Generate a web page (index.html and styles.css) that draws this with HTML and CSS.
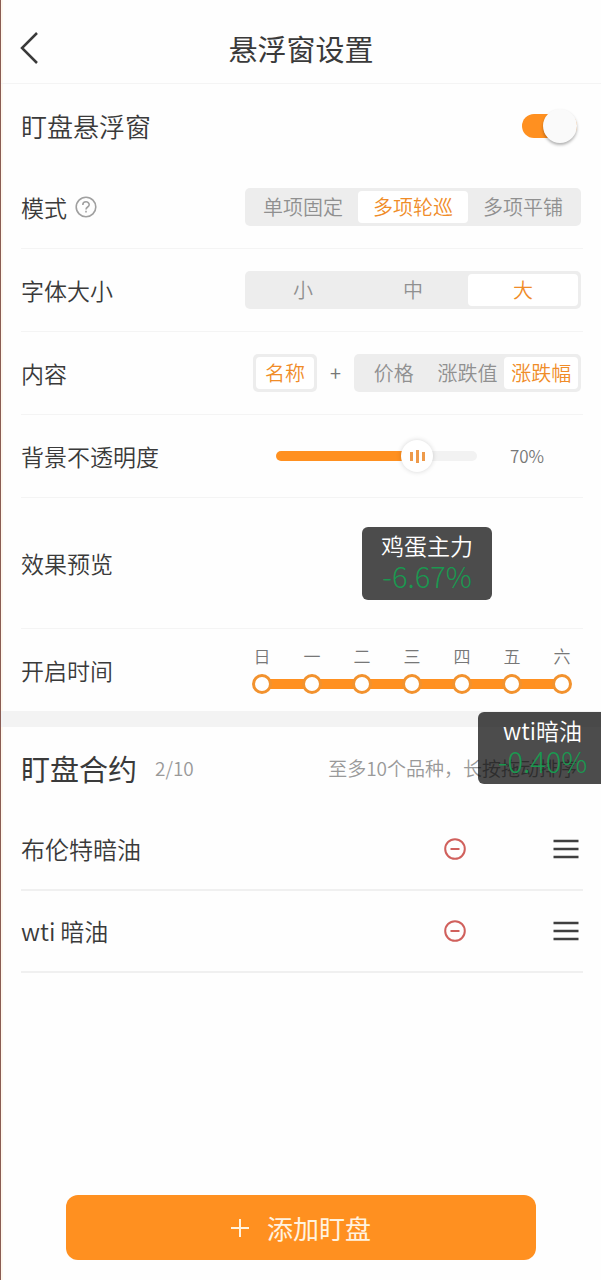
FILE: index.html
```html
<!DOCTYPE html>
<html lang="zh-CN">
<head>
    <meta charset="UTF-8">
    <meta name="viewport" content="width=device-width, initial-scale=1.0">
    <title>悬浮窗设置</title>
    <link rel="stylesheet" href="styles.css">
</head>
<body>
    <div class="page">
        <header>
            <button type="button" class="icon-btn" aria-label="返回">
                <svg width="20" height="34" viewBox="0 0 20 34" fill="none" stroke="#3a3a3a" stroke-width="2.5"><path d="M18 2 L3 17 L18 32"/></svg>
            </button>
            <h1>悬浮窗设置</h1>
        </header>

        <main>
            <section class="settings">
                <div class="row row-main">
                    <label for="float">盯盘悬浮窗</label>
                    <input type="checkbox" id="float" class="switch" checked>
                </div>

                <div class="row">
                    <span class="name">模式</span>
                    <button type="button" class="icon-btn help" aria-label="模式说明">
                        <svg width="22" height="22" viewBox="0 0 22 22" fill="none" stroke="#a0a0a0" stroke-width="1.6"><circle cx="11" cy="11" r="9.8"/><path d="M7.8 9 C7.8 4.8 14.2 4.8 14.2 8.8 C14.2 11 11 11 11 13.4"/><path d="M11 14.8 V16.6"/></svg>
                    </button>
                    <div class="segment" role="radiogroup" aria-label="模式">
                        <label><input type="radio" name="mode"><span>单项固定</span></label>
                        <label><input type="radio" name="mode" checked><span>多项轮巡</span></label>
                        <label><input type="radio" name="mode"><span>多项平铺</span></label>
                    </div>
                </div>

                <div class="row">
                    <span class="name">字体大小</span>
                    <div class="segment" role="radiogroup" aria-label="字体大小">
                        <label><input type="radio" name="size"><span>小</span></label>
                        <label><input type="radio" name="size"><span>中</span></label>
                        <label><input type="radio" name="size" checked><span>大</span></label>
                    </div>
                </div>

                <div class="row">
                    <span class="name">内容</span>
                    <div class="content-pick">
                        <div class="segment segment-one">
                            <label><input type="checkbox" checked><span>名称</span></label>
                        </div>
                        <span class="plus">+</span>
                        <div class="segment segment-values" role="radiogroup" aria-label="内容">
                            <label><input type="radio" name="value"><span>价格</span></label>
                            <label><input type="radio" name="value"><span>涨跌值</span></label>
                            <label><input type="radio" name="value" checked><span>涨跌幅</span></label>
                        </div>
                    </div>
                </div>

                <div class="row">
                    <label for="opacity">背景不透明度</label>
                    <div class="slider">
                        <input type="range" id="opacity" min="0" max="100" value="70">
                    </div>
                    <output for="opacity">70%</output>
                </div>

                <div class="row row-preview">
                    <span class="name">效果预览</span>
                    <div class="ticker">
                        <span>鸡蛋主力</span>
                        <strong>-6.67%</strong>
                    </div>
                </div>

                <div class="row row-time">
                    <span class="name">开启时间</span>
                    <div class="week">
                        <label>日<input type="checkbox" checked></label>
                        <label>一<input type="checkbox" checked></label>
                        <label>二<input type="checkbox" checked></label>
                        <label>三<input type="checkbox" checked></label>
                        <label>四<input type="checkbox" checked></label>
                        <label>五<input type="checkbox" checked></label>
                        <label>六<input type="checkbox" checked></label>
                    </div>
                </div>
            </section>

            <section class="contracts">
                <div class="contracts-head">
                    <h2>盯盘合约</h2>
                    <span class="count">2/10</span>
                    <span class="hint">至多10个品种，长按拖动排序</span>
                </div>
                <ul>
                    <li>
                        <span class="name">布伦特暗油</span>
                        <button type="button" class="icon-btn" aria-label="删除布伦特暗油">
                            <svg width="22" height="22" viewBox="0 0 22 22" fill="none" stroke="#d0605c" stroke-width="2"><circle cx="11" cy="11" r="9.8"/><path d="M6.5 11 H15.5"/></svg>
                        </button>
                        <button type="button" class="icon-btn" aria-label="拖动排序">
                            <svg width="26" height="20" viewBox="0 0 26 20" stroke="#3f3f3f" stroke-width="2.4"><path d="M0.5 2 H25.5 M0.5 10 H25.5 M0.5 18 H25.5"/></svg>
                        </button>
                    </li>
                    <li>
                        <span class="name">wti&thinsp;暗油</span>
                        <button type="button" class="icon-btn" aria-label="删除wti暗油">
                            <svg width="22" height="22" viewBox="0 0 22 22" fill="none" stroke="#d0605c" stroke-width="2"><circle cx="11" cy="11" r="9.8"/><path d="M6.5 11 H15.5"/></svg>
                        </button>
                        <button type="button" class="icon-btn" aria-label="拖动排序">
                            <svg width="26" height="20" viewBox="0 0 26 20" stroke="#3f3f3f" stroke-width="2.4"><path d="M0.5 2 H25.5 M0.5 10 H25.5 M0.5 18 H25.5"/></svg>
                        </button>
                    </li>
                </ul>
            </section>
        </main>

        <button type="button" class="add">
            <svg width="18" height="18" viewBox="0 0 18 18" stroke="#fff3e0" stroke-width="2"><path d="M9 0 V18 M0 9 H18"/></svg>
            添加盯盘
        </button>

        <!-- floating window docked to the right edge -->
        <div class="ticker ticker-float">
            <span>wti暗油</span>
            <strong>-0.40%</strong>
        </div>
    </div>
</body>
</html>
```
FILE: styles.css
```css
* {
    box-sizing: border-box;
}
body {
    margin: 0;
    background-color: #fefefe;
    color: #3a3a3a;
    font-family: "Noto Sans CJK SC", sans-serif;
    font-size: 23px;
    font-weight: 350;
    line-height: 32px;
}
button, input {
    margin: 0;
    font-family: inherit;
}
.page {
    position: relative;
    display: flex;
    flex-direction: column;
    min-height: 100vh;
    border-left: 1px solid #8a5c54;
    box-shadow: inset 2px 0 #fff8ee;
}
.icon-btn {
    display: flex;
    padding: 0;
    border: none;
    background: none;
    cursor: pointer;
}

header {
    display: grid;
    grid-template-columns: 40px 1fr 40px;
    align-items: center;
    height: 84px;
    padding: 13px 18px 0;
    border-bottom: 1px solid #f4f4f4;
}
h1, h2 {
    margin: 0;
    font-size: 29px;
    font-weight: 400;
    line-height: 40px;
}
h1 {
    text-align: center;
}

.settings, .contracts {
    padding: 0 18px 0 20px;
}
.row {
    display: flex;
    align-items: center;
    min-height: 83px;
    padding-right: 2px;
    border-bottom: 1px solid #f4f4f4;
}
.row > :first-child {
    margin-right: auto;
}
.row-main {
    min-height: 82px;
    padding: 2px 6px 0 0;
    border-bottom: none;
    font-size: 26px;
}
.row-preview {
    min-height: 131px;
    padding-right: 91px;
}
.row-time {
    min-height: 82px;
    padding-right: 11px;
    border-bottom: none;
}
.row > .name:has(+ .help) {
    margin-right: 8px;
}
.help {
    margin-right: auto;
}

.switch {
    display: flex;
    align-items: center;
    width: 55px;
    height: 24px;
    border-radius: 12px;
    background-color: #ddd;
    appearance: none;
}
.switch::before {
    content: "";
    width: 34px;
    height: 34px;
    border-radius: 50%;
    background-color: #fafafa;
    box-shadow: 0 2px 3px rgba(0,0,0,0.3);
}
.switch:checked {
    justify-content: flex-end;
    background-color: #ff9020;
}

.segment {
    display: flex;
    width: 336px;
    padding: 3px;
    border-radius: 5px;
    background-color: #ededed;
}
.segment label {
    flex: 1;
}
.segment input {
    position: absolute;
    opacity: 0;
}
.segment span {
    display: block;
    border-radius: 4px;
    color: #909090;
    font-size: 20px;
    text-align: center;
}
.segment input:checked + span {
    background-color: white;
    color: #f08c28;
}
.content-pick {
    display: flex;
    align-items: center;
}
.segment-one {
    width: 64px;
}
.segment-values {
    width: 227px;
}
.plus {
    width: 37px;
    color: #777;
    font-size: 20px;
    text-align: center;
}

.slider {
    width: 201px;
    height: 10px;
    border-radius: 5px;
    background: linear-gradient(to right, #ff9020 70%, #f2f2f2 70%);
}
.slider input {
    display: block;
    width: calc(100% + 32px);
    height: 10px;
    margin: 0 -16px;
    background: none;
    appearance: none;
}
.slider input::-webkit-slider-thumb {
    width: 32px;
    height: 32px;
    border-radius: 50%;
    /* three grip bars */
    background:
        linear-gradient(#ee9a4a, #ee9a4a) 9px center / 3px 9px no-repeat,
        linear-gradient(#ee9a4a, #ee9a4a) 15px center / 3px 13px no-repeat,
        linear-gradient(#ee9a4a, #ee9a4a) 21px center / 3px 9px no-repeat,
        white;
    box-shadow: 0 0 5px rgba(0,0,0,0.16);
    appearance: none;
}
output {
    width: 104px;
    padding-right: 4px;
    color: #777;
    font-size: 17px;
    text-align: center;
}

.ticker {
    display: flex;
    flex-direction: column;
    width: 130px;
    padding: 3px 0 10px;
    border-radius: 6px;
    background-color: rgba(0,0,0,0.7);
    color: white;
    line-height: 30px;
    text-align: center;
}
.ticker strong {
    color: #1a9850;
    font-size: 29px;
    font-weight: 300;
}
.ticker-float {
    position: absolute;
    top: 712px;
    right: 0;
    width: 123px;
    padding: 3px 0 9px 6px;
    border-radius: 6px 0 0 6px;
}

.week {
    display: flex;
    justify-content: space-between;
    width: 320px;
    background: linear-gradient(#ff9020, #ff9020) center bottom 5px / calc(100% - 20px) 10px no-repeat;
}
.week label {
    display: flex;
    flex-direction: column;
    align-items: center;
    gap: 8px;
    width: 20px;
    color: #777;
    font-size: 17px;
    line-height: 20px;
}
.week input {
    width: 20px;
    height: 20px;
    border: 3px solid #f2922e;
    border-radius: 50%;
    background-color: white;
    appearance: none;
}

.contracts {
    border-top: 16px solid #f3f3f3;
}
.contracts-head {
    display: flex;
    align-items: center;
    height: 82px;
}
.count {
    margin-left: 18px;
    color: #999;
    font-size: 19px;
}
.hint {
    margin-left: auto;
    padding-right: 6px;
    color: #999;
    font-size: 19px;
}
ul {
    margin: 0;
    padding: 0;
    list-style: none;
}
li {
    display: flex;
    align-items: center;
    gap: 87px;
    height: 82px;
    padding-right: 4px;
    border-bottom: 2px solid #f0f0f0;
    font-size: 24px;
}
li .name {
    flex: 1;
}

.add {
    display: flex;
    align-items: center;
    justify-content: center;
    gap: 18px;
    height: 65px;
    margin: auto 65px 20px;
    border: none;
    border-radius: 12px;
    background-color: #ff9020;
    color: #fff3e0;
    font-size: 26px;
    cursor: pointer;
}
```
